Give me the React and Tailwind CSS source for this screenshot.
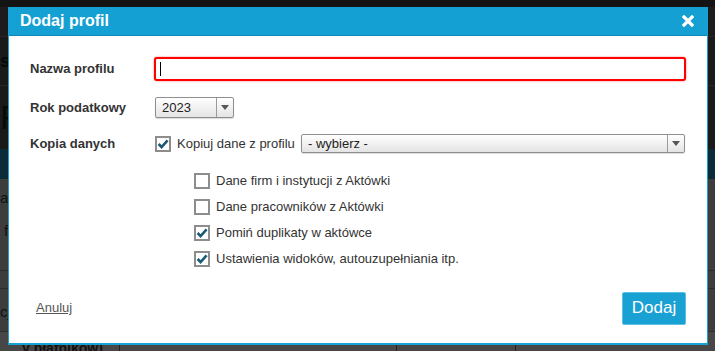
import React from 'react';

const Checkbox = ({ checked }) => (
  <span className="box-border flex h-[16px] w-[16px] shrink-0 items-center justify-center border-2 border-[#8d8d8d] bg-white">
    {checked && (
      <svg viewBox="0 0 12 12" className="h-[12px] w-[12px]">
        <path d="M1.6 6 L4.6 9 L10.6 2.4" fill="none" stroke="#1b5a73" strokeWidth="2.6" />
      </svg>
    )}
  </span>
);

const Arrow = () => (
  <svg viewBox="0 0 8 5" className="h-[5px] w-[8px]">
    <path d="M0 0 H8 L4 5 Z" fill="#555" />
  </svg>
);

const Select = ({ value, className }) => (
  <div className={`box-border flex items-stretch rounded-[2px] border border-[#8e8e8e] bg-gradient-to-b from-white to-[#e4e4e4] shadow-[0_1px_1px_rgba(0,0,0,0.15)] ${className}`}>
    <span className="flex flex-1 items-center pl-[6px] text-[13px] text-[#222]">{value}</span>
    <span className="flex w-[17px] items-center justify-center border-l border-[#9a9a9a]">
      <Arrow />
    </span>
  </div>
);

const options = [
  { label: 'Dane firm i instytucji z Aktówki', checked: false },
  { label: 'Dane pracowników z Aktówki', checked: false },
  { label: 'Pomiń duplikaty w aktówce', checked: true },
  { label: 'Ustawienia widoków, autouzupełniania itp.', checked: true },
];

export default function App() {
  return (
    <div className="relative h-[351px] w-[715px] overflow-hidden bg-[#141414] font-['Liberation_Sans',Arial,sans-serif]">
      {/* page behind the overlay */}
      <div className="flex h-full flex-col pt-[7px]">
        <div className="h-[30px] shrink-0 border-b border-[#262626] bg-[#1c1c1c]" />
        <div className="flex h-[49px] shrink-0 items-center border-b border-[#262626] bg-[#1a1a1a] text-[18px] font-bold text-[#080808]">
          <span>st</span>
        </div>
        <div className="flex h-[63px] shrink-0 items-center bg-[#1a1a1a] text-[34px] text-[#0a0a0a]">
          <span>F</span>
        </div>
        <div className="h-[30px] shrink-0 bg-[#0b2b39]" />
        <div className="flex min-h-0 flex-1 flex-col bg-[#3d3d3d] text-[15px] text-[#111]">
          <div className="h-[36px] shrink-0 pt-[8px]">ap</div>
          <div className="h-[36px] shrink-0 pt-[5px] pl-[4px]">f</div>
          <div className="h-[20px] shrink-0 border-b border-[#2c2c2c]" />
          <div className="h-[18px] shrink-0 border-b border-[#2c2c2c]" />
          <div className="h-[42px] shrink-0 pt-[12px]">cj</div>
          <div className="flex min-h-0 flex-1 overflow-hidden border-t border-[#2e2e2e] bg-[#474747]">
            <div className="w-[120px] border-r border-[#222] pl-[22px] pt-[9px] text-[14px] font-bold leading-[14px] text-[#111]">y płatników)</div>
            <div className="w-[277px] border-r border-[#222]" />
            <div className="w-[119px] border-r border-[#222]" />
            <div className="flex-1" />
          </div>
        </div>
      </div>

      {/* modal */}
      <div className="absolute left-[8px] top-[7px] box-border flex h-[338px] w-[700px] flex-col border-x border-b-2 border-[#16a0d3] bg-white">
        <div className="flex h-[29px] shrink-0 items-center justify-between border-b border-[#1088b6] bg-[#15a0d3] pl-[11px] pr-[13px]">
          <span className="text-[16px] font-bold text-white">Dodaj profil</span>
          <svg viewBox="0 0 12 12" className="h-[12px] w-[12px]">
            <path d="M2 2 L10 10 M10 2 L2 10" stroke="white" strokeWidth="3.2" strokeLinecap="square" />
          </svg>
        </div>

        <div className="flex flex-1 flex-col pl-[21px] pr-[21px] text-[13px] text-[#333]">
          <div className="mt-[21px] flex items-center">
            <span className="w-[124px] font-bold text-[#333]">Nazwa profilu</span>
            <div className="box-border flex h-[24px] flex-1 items-center rounded-[3px] border-2 border-[#ff0000] bg-white pl-[4px] shadow-[0_0_2px_rgba(255,0,0,0.6)]">
              <span className="h-[14px] w-px bg-black" />
            </div>
          </div>

          <div className="mt-[16px] flex items-center">
            <span className="w-[125px] font-bold">Rok podatkowy</span>
            <Select value="2023" className="h-[21px] w-[79px]" />
          </div>

          <div className="mt-[16px] flex items-center">
            <span className="w-[125px] font-bold">Kopia danych</span>
            <Checkbox checked />
            <span className="ml-[6px] w-[124px] text-[#333]">Kopiuj dane z profilu</span>
            <Select value="- wybierz -" className="mr-[1px] h-[19px] flex-1" />
          </div>

          <div className="mt-[19px] flex flex-col gap-[10px] pl-[164px]">
            {options.map((o) => (
              <div key={o.label} className="flex h-[16px] items-center">
                <Checkbox checked={o.checked} />
                <span className="ml-[6px] text-[#333]">{o.label}</span>
              </div>
            ))}
          </div>

          <div className="mt-[25px] flex items-center justify-between">
            <span className="ml-[6px] text-[#555] underline">Anuluj</span>
            <button className="h-[33px] w-[64px] rounded-[2px] border border-[#5cc0e6] bg-[#1aa1d4] text-[17px] text-white">
              Dodaj
            </button>
          </div>
        </div>
      </div>
    </div>
  );
}
